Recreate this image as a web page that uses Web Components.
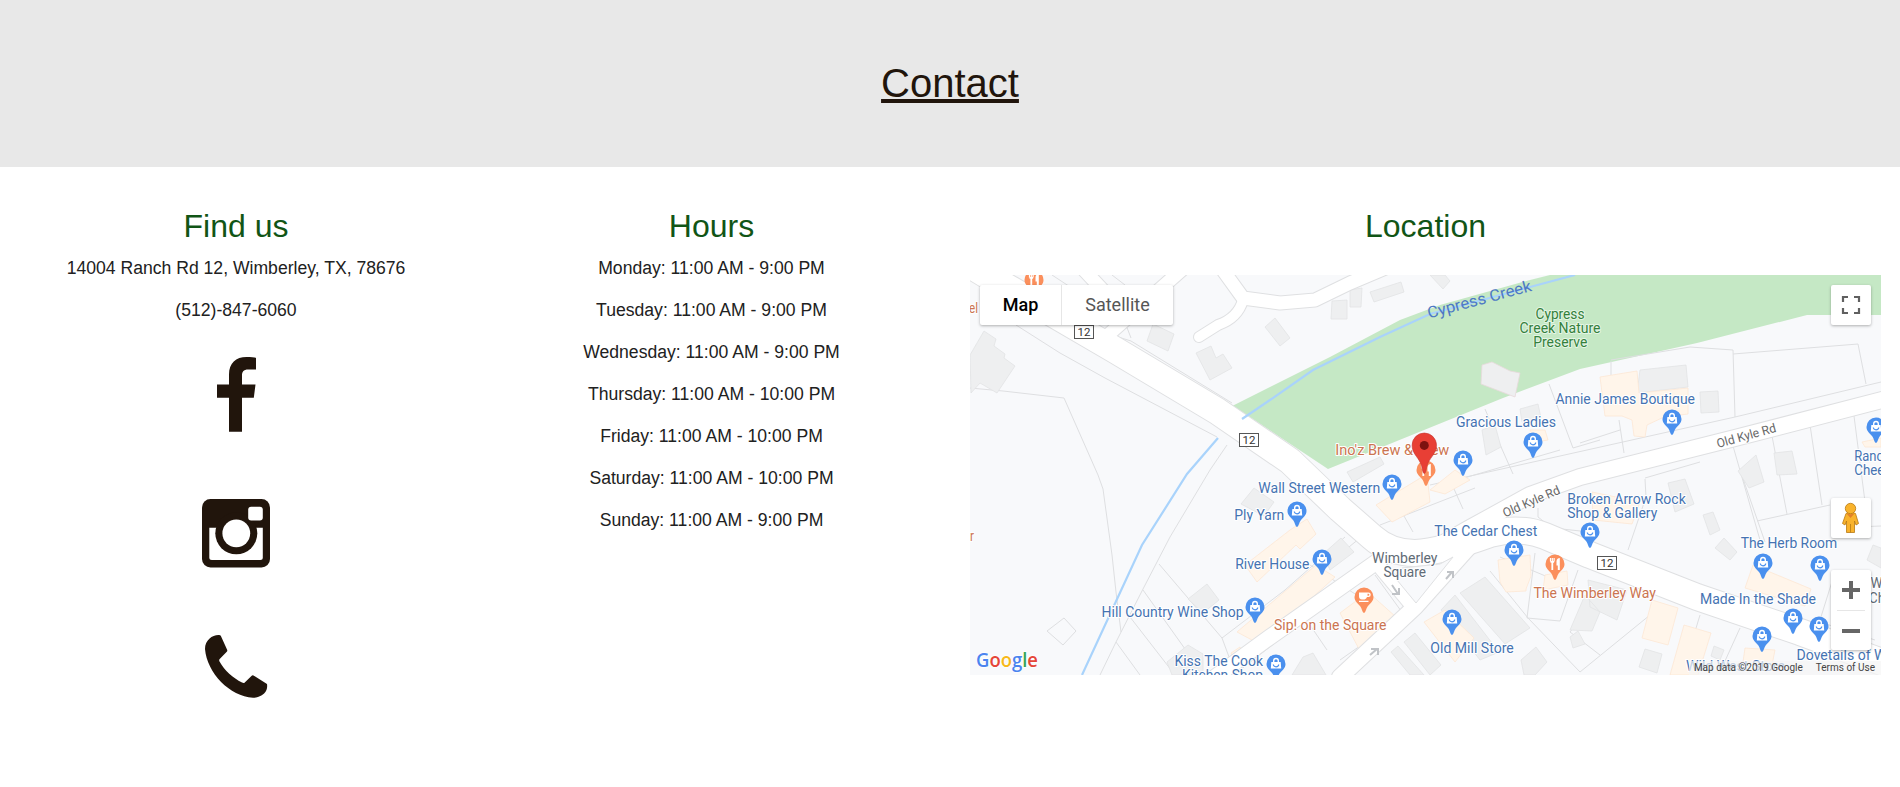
<!DOCTYPE html>
<html lang="en">
<head>
<meta charset="utf-8">
<title>Contact</title>
<style>
body{margin:0;background:#fff;color:#212121;font:17.600px/27px "Liberation Sans",Arial,sans-serif}
</style>
</head>
<body>
<contact-page></contact-page>
<script>
const define=(name,html,setup)=>customElements.define(name,class extends HTMLElement{
  constructor(){
    super();
    const t=document.createElement('template');
    t.innerHTML=html;
    this.attachShadow({mode:'open'}).append(t.content.cloneNode(true));
  }
  connectedCallback(){ if(setup&&!this.ready){this.ready=true;setup(this.shadowRoot,this);} }
});

define('page-banner',`<style>
:host{display:flex;justify-content:center;height:167px;background:#e8e8e8;color:#21150c}
h1{margin:60px 0 0;font-size:40px;line-height:46px;font-weight:400;text-decoration:underline;text-decoration-thickness:4px;text-underline-offset:2px;text-decoration-skip-ink:none}
</style><h1><slot></slot></h1>`);

define('info-column',`<style>
:host{display:block;text-align:center}
h2{margin:0 0 9px;font-size:32px;line-height:40px;font-weight:400;color:#115516}
</style><h2><slot name="title"></slot></h2><slot></slot>`);

define('info-line',`<style>:host{display:block;height:42px;line-height:27px;white-space:nowrap}</style><slot></slot>`);

define('social-links',`<style>
:host{display:flex;flex-direction:column;align-items:center;padding-top:18px;color:#21150c}
svg{display:block;fill:currentColor}
.ig{margin-top:67px}.ph{margin-top:67px}
</style>
<svg width="39" height="75"><path d="M39 .8V12.5H31.5C26 12.5 25 15 25 19V27.5H38.5L36.8 40.8H25V74.7H12V40.8H0V27.5H12V17.5C12 6 19 0 29.5 0 34 0 37.5.3 39 .8z"/></svg>
<svg class="ig" width="68" height="69"><rect width="68" height="68.5" rx="8.5"/><path fill="#fff" d="M7.3 28.7H60.8V58.5Q60.8 61 58.3 61H9.800Q7.300 61 7.300 58.500z"/><circle cx="34.300" cy="34.300" r="21"/><circle cx="34.300" cy="34.300" r="13.900" fill="#fff"/><rect x="46.200" y="7.700" width="14.600" height="13.800" rx="3" fill="#fff"/></svg>
<svg class="ph" width="63" height="63"><path d="M15 .2C8.500-.8 0 4.500 0 14 2 38 25 61.500 48 62.800 54 62.800 59 59.500 61 56 62.300 53.500 62.300 51 62 49L48.500 40.500Q47.500 39.800 46.700 40.700L39.500 47.700Q38.500 48.300 37 47.500C28 43 19.500 35.500 14.500 26.500Q13.800 25 14.700 24L22 16.500Q22.600 15.500 22 14.500L16 1.200Q15.600.4 15 .2z"/></svg>`);

define('map-pin',`<style>
:host{position:absolute;width:22px;height:30px;transform:translate(-11px,-11px)}
svg{display:block;overflow:visible}
:host{--pin:#4a90ee}
:host([kind=food]),:host([kind=cup]){--pin:#fb8f5c}
g{display:none}
:host([kind=shop]) .shop,:host([kind=food]) .food,:host([kind=cup]) .cup{display:inline}
</style><svg width="22" height="30" viewBox="-11 -11 22 30">
<path fill="var(--pin)" d="M0-9.500A9.500 9.500 0 0 1 9.500 0C9.500 4.500 6 6.300 3.800 9.200 2 11.600 1.500 15.800 0 15.800S-2 11.600-3.800 9.200C-6 6.300-9.500 4.500-9.500 0A9.500 9.500 0 0 1 0-9.500z"/>
<g class="shop"><path fill="none" stroke="#fff" stroke-width="1.400" d="M-2.300-1.500V-3.200a2.300 2.300 0 0 1 4.600 0V-1.500"/><path fill="#fff" d="M-4.700-2H4.700L5.200 4.600H-5.200z"/><path fill="none" stroke="var(--pin)" stroke-width="1.200" d="M-2.700.6a2.700 2.200 0 0 0 5.400 0"/></g>
<g class="food" fill="none" stroke="#fff"><path stroke-width="1.200" d="M-4.500-6V-2.500M-2.700-6V-2M-.9-6V-2.500"/><path stroke-width="1.800" d="M-4.500-2.200H-.9M-2.700-2V6"/><path fill="#fff" stroke="none" d="M4.800-6V6H2.800V1.500H1.500V-3Q2-6 4.800-6z"/></g>
<g class="cup"><path fill="#fff" d="M-5-4.500H4.500a2 2 0 0 1 0 4.500H3A3.500 3.200 0 0 1 .5 2.500H-2A3.200 3.200 0 0 1-5-.5zM3.500-3.300V-1.200H4.300a1 1 0 0 0 0-2.100zM-5 3.700H4.500V5H-5z"/></g>
</svg>`,(root,el)=>{el.style.left=el.getAttribute('x')-970+'px';el.style.top=el.getAttribute('y')-275+'px';});

define('route-shield',`<style>
:host{position:absolute;box-sizing:border-box;width:20px;height:14px;border:1px solid #555;background:#fff;color:#333;font:11.500px/12px Roboto,sans-serif;text-align:center}
</style><slot></slot>`,(root,el)=>{el.style.left=el.getAttribute('x')-970+'px';el.style.top=el.getAttribute('y')-275+'px';});

define('map-type',`<style>
:host{position:absolute;left:10px;top:10px;display:flex;height:40px;background:#fff;border-radius:2px;box-shadow:0 1px 3px rgba(0,0,0,.3);font:18px/40px Roboto,sans-serif;color:#565656}
b{font-weight:500;color:#000;width:81px;text-align:center;border-right:1px solid #e6e6e6}
span{width:111px;text-align:center}
</style><b>Map</b><span>Satellite</span>`);

define('map-button',`<style>
:host{display:block;width:40px;background:#fff;border-radius:2px;box-shadow:0 1px 3px rgba(0,0,0,.3)}
</style><slot></slot>`);

define('map-controls',`<style>
:host{position:absolute;left:861px;top:10px;display:flex;flex-direction:column}
svg{display:block}
.peg{margin-top:173px}.zoom{margin-top:32px}
</style>
<map-button><svg width="40" height="40" fill="none" stroke="#606060" stroke-width="2.200"><path d="M12 17V12H17M23 12H28V17M28 23V28H23M17 28H12V23"/></svg></map-button>
<map-button class="peg"><svg width="40" height="40" fill="#f9b32c" stroke="#b87a14" stroke-width=".8"><path d="M15 15.500Q19.500 12.500 24.500 15.500L27.500 25.500 25 27 23.500 23V34.500H15.500V23L14 27 11.500 25.500z"/><path d="M19.500 26V34.500" /><circle cx="19.500" cy="10.500" r="5.200"/><path fill="#e2802a" stroke="none" d="M15.500 15.500Q19.500 17 23.500 15.500L19.500 20z"/></svg></map-button>
<map-button class="zoom"><svg width="40" height="80"><path stroke="#666" stroke-width="4" d="M11 20H29M20 11V29M11 61H29"/><path stroke="#e6e6e6" d="M6 40.500H34"/></svg></map-button>`);

define('map-view',`<style>
:host{display:block;position:relative;width:911px;height:400px;overflow:hidden;background:#f8f9fb}
svg{display:block}
text{font-family:Roboto,sans-serif;font-size:13.800px;fill:#4573b2;paint-order:stroke;stroke:#fff;stroke-width:2px;stroke-linejoin:round}
.food{fill:#cb7450}.park{fill:#34803c;stroke:#e4f5e4}.grey{fill:#5f6b76}.road{fill:#686868;font-size:12.500px}.water{fill:#4e79c4;font-size:16px;stroke:none}
.over{position:absolute;left:0;top:0;pointer-events:none}
.terms{position:absolute;right:0;bottom:0;display:flex;gap:13px;box-sizing:border-box;height:14px;padding:0 6px 0 5px;background:rgba(245,245,245,.7);font:10px/14px Roboto,sans-serif;color:#444;white-space:nowrap}
.logo text{font:600 20px "Open Sans",sans-serif;stroke-width:1.500px}
</style>
<svg width="911" height="400" viewBox="970 275 911 400">
<path fill="#c5e8c5" d="M1232.700 405.700L1270 387 1330 357 1400 320 1440 305 1530 280 1550 275H1881V315H1807L1697 343 1580 369 1503 398 1328 469z"/>
<g fill="none" stroke="#dedfe1" stroke-width="1">
<path d="M980 275L1022 302M1052 275L1090 300M1112 275L1125 285M1016 325L1060 353 1105 378 1217 437M1115 336L1131 341 1232 403M1126 325L1131 338"/>
<path d="M970 388L1003 391 1064 398 1098 475 1103 489 1112 555 1116 592 1121 632M1227 445L1210 470 1170 537 1143 589 1116 642 1100 675M1159 564L1222 638 1232 665M1143 590L1200 670M1130 617L1175 675M1116 642L1140 675M1222 638L1285 590M1047 631L1064 618 1076 631 1063 645z"/>
<path d="M1485 409L1498 440 1513 474M1549 384L1573 448 1600 440M1611 361V375M1619 420L1624 453M1580 443L1620 430M1611 360L1690 347 1733 350 1735 417M1733 354L1858 344 1866 384M1430 485L1735 417 1881 382M1440 485L1560 450M1450 480L1463 509M1772 436L1787 514M1810 425L1822 505M1854 416L1868 525M1733 446L1760 540M1740 470L1765 542M1757 521L1830 505M1855 527L1881 526M1645 479L1646 497 1628 550M1645 478L1700 462M1538 508V517L1552 528 1590 532M1395 500L1413 532M1380 525L1475 488"/>
<path d="M1490 571L1528 618 1580 672M1500 557L1555 580M1535 553L1527 618 1560 621 1578 570M1580 620L1570 632 1600 655M1375 575L1404 615 1340 660M1360 538L1290 595M1350 585L1240 670M1345 537L1285 590M1310 565L1380 610M1310 625L1327 650M1700 615L1690 648M1740 628L1720 672M1650 615L1580 672M1820 620L1835 572M1820 622L1875 640"/>
</g>
<g fill="#eeeff0" stroke="#e2e3e4" stroke-width=".8">
<path d="M970 355L984 331 996 339 994 346 1005 354 1004 358 1015 366 997 393 980 383 971 393z"/>
<path d="M1153 324L1174 334 1168 351 1147 341zM1196 353L1211 346 1216 358 1223 354 1232 368 1210 380zM1265 327L1275 318 1290 338 1280 346zM1332 301L1347 300 1347 319 1331 319zM1350 290L1362 288 1361 307 1350 307zM1370 292L1401 282 1404 292 1374 302zM1430 275H1445L1450 281 1443 289z"/>
<path d="M1482 365L1492 362 1510 371 1520 373 1515 397 1481 384z" stroke="#e9d9dc"/>
<path d="M1640 370L1686 365 1688 387 1637 393zM1700 392L1718 391 1719 412 1701 413zM1520 409L1538 404 1541 418 1522 422zM1482 430L1495 425 1501 447 1486 455zM1738 471L1756 455 1764 482 1749 488zM1774 453L1792 451 1797 474 1777 475zM1668 483L1685 479 1694 504 1675 512zM1703 515L1713 512 1720 530 1710 535zM1715 548L1724 538 1737 552 1730 560zM1873 545L1881 548V568L1867 560zM1347 472L1380 457 1384 464 1353 482z"/>
<path d="M1241 504L1254 488 1274 502 1264 516zM1188 599L1207 584 1219 600 1203 613zM1167 662L1188 645 1203 654V675H1172zM1323 554L1341 538 1354 552 1330 570zM1404 642L1415 633 1441 665 1430 675zM1391 652L1398 646 1424 675H1410zM1303 657L1313 653 1326 675H1292zM1441 610L1455 595 1499 652 1480 660zM1460 593L1485 577 1530 628 1505 644zM1521 660L1536 647 1547 662 1535 675H1524zM1570 630L1585 595 1600 612 1592 631zM1570 637L1578 631 1585 644 1573 648zM1588 580L1627 590 1617 620 1590 607zM1645 649L1662 654 1657 673 1639 667zM1714 646L1724 650 1720 660 1711 656z"/>
</g>
<g fill="#fff5ea" stroke="#fce7d4" stroke-width=".8">
<path d="M1600 377L1637 371 1639 393 1688 388V414L1664 417 1647 425 1645 437 1634 436 1632 420 1622 416 1605 416zM1376 505L1427 474 1430 502 1392 522zM1430 490L1455 470 1470 480 1445 494zM1245 565L1290 530 1307 519 1316 534 1300 549 1296 545 1257 582zM1237 632L1316 565 1335 577 1260 645 1252 640zM1231 653L1240 647 1243 657 1234 663zM1340 613L1368 592 1396 617 1359 649zM1424 622L1445 610 1474 638 1455 662zM1498 560L1530 555 1531 576 1526 589 1526 591 1506 592 1500 582zM1545 575L1567 571 1568 585 1543 590zM1652 600L1678 608 1668 645 1642 638zM1684 625L1711 633 1698 675H1670zM1753 565L1811 589 1805 606 1745 588zM1745 648L1775 650 1772 665 1743 662zM1592 492L1640 502 1632 524 1593 520zM1530 430H1545L1548 440 1536 442zM1862 442L1881 438V447H1865z"/>
</g>
<g fill="none" stroke-linejoin="round" stroke-linecap="round">
<g id="casing"></g><g id="fill"></g>
</g>
<path fill="#f8f9fb" stroke="#e0e1e3" d="M1402 568L1440 564 1453 557 1416 603 1397 580z"/>
<path fill="none" stroke="#a9d3fb" stroke-width="2.200" d="M1575 275L1530 287 1430 314 1380 337 1313 370 1270 400 1242 419M1218 438L1187 474 1142 545 1082 675"/>
<g fill="none" stroke="#c0c3c7" stroke-width="2"><path d="M1392 585L1398 594M1399 588V594H1392M1446 579L1452 572M1447 572H1453V578M1370 655L1377 649M1371 649H1378V655"/></g>
</svg>
<route-shield x="1074" y="325">12</route-shield><route-shield x="1239" y="433">12</route-shield><route-shield x="1597" y="556">12</route-shield>
<div id="pins"></div>
<svg class="over" id="labels" width="911" height="400" viewBox="970 275 911 400"></svg>
<svg class="over" width="911" height="400" viewBox="970 275 911 400">
<path fill="#e83f35" stroke="#c53630" stroke-width=".6" d="M1424.300 433a12.200 12.200 0 0 1 12.200 12.200C1436.500 453 1431 456.500 1428 463 1426.300 467 1426 473.500 1424.300 473.500S1422.300 467 1420.500 463C1417.500 456.500 1412.100 453 1412.100 445.200A12.200 12.200 0 0 1 1424.300 433z"/><circle cx="1424.300" cy="445.400" r="4.500" fill="#7d1210"/>
<g class="logo"><text x="976" y="667" textLength="62" lengthAdjust="spacingAndGlyphs"><tspan fill="#4b84ef">G</tspan><tspan fill="#e54638">o</tspan><tspan fill="#f7b91b">o</tspan><tspan fill="#4b84ef">g</tspan><tspan fill="#38a554">l</tspan><tspan fill="#e54638">e</tspan></text></g>
</svg>
<div class="terms"><span>Map data ©2019 Google</span><span>Terms of Use</span></div>
<map-type></map-type><map-controls></map-controls>`,root=>{
  const ns='http://www.w3.org/2000/svg';
  const roads=[
    [26,'M960 259L1000 283 1115 350 1217 411 1290 461 1340 509 1372 537Q1390 553 1415 553 1440 552 1490 534 1520 526 1545 536L1590 555 1697 597 1800 632 1890 665'],
    [16,'M1890 398L1735 438 1580 477 1530 495 1470 528 1440 545'],
    [15,'M1385 556L1270 637 1215 677'],[16,'M1475 540L1415 607 1340 677'],[13,'M1378 565L1413 607'],
    [13,'M1185 267L1108 335M1084 270L1112 300'],
    [13,'M1217 262L1243 298 1280 303 1315 300 1350 283 1395 264'],[10,'M1243 300Q1238 318 1218 325L1199 337']
  ];
  for(const [w,d] of roads) for(const [id,c,e] of [['casing','#dfe0e2',2],['fill','#fff',0]]){
    const p=document.createElementNS(ns,'path');
    p.setAttribute('d',d);p.setAttribute('stroke',c);p.setAttribute('stroke-width',w+e);
    root.getElementById(id).append(p);
  }
  const pins=[['food',1034.3,279.7],['shop',1533.3,441.7],['shop',1463.3,460.3],['shop',1672.3,418.7],['shop',1876.3,427.3],['shop',1392.3,484],['shop',1297.3,510.7],['shop',1322.3,559.3],['shop',1255.3,607.3],['shop',1275.7,663.7],['cup',1364.3,596.7],['shop',1452.3,619.3],['shop',1514.3,550.3],['food',1555.3,564.3],['shop',1590.3,532.3],['shop',1763.3,562.7],['shop',1820.3,565.3],['shop',1793.3,618.3],['shop',1819.3,626.3],['shop',1762.3,636.3],['food',1426.3,470]];
  for(const [k,x,y] of pins){
    const p=document.createElement('map-pin');
    p.setAttribute('kind',k);p.setAttribute('x',x);p.setAttribute('y',y);
    root.getElementById('pins').append(p);
  }
  const labels=[
    ['Hill Country Wine Shop',1101.5,617,142],['Kiss The Cook',1174.5,666,88.5],['Kitchen Shop',1182,680,81],['River House',1235.3,569,74],['Ply Yarn',1234.3,519.7,50],['Wall Street Western',1258.3,493,122],['The Cedar Chest',1434.3,536,103],
    ['Wimberley',1372,563.3,65.5,'grey'],['Square',1383.5,577.3,42.5,'grey'],['Sip! on the Square',1274,630,112.5,'food'],['Old Mill Store',1430.3,653,83.5],['The Wimberley Way',1533.5,598,122.5,'food'],
    ['Broken Arrow Rock',1567.3,503.7,118.5],['Shop & Gallery',1567.3,518,90],['The Herb Room',1740.7,548,96.5],['Made In the Shade',1700,604,116],['Dovetails of W',1796.5,660,90],['Wild West Store',1686,671,99],
    ['W',1870.5,588,12,'grey'],['Ch',1869,603,16,'grey'],['Ranc',1854.3,461,29],['Chee',1854.3,475,30],['Annie James Boutique',1555.5,404,139.5],['Gracious Ladies',1456,427,100],["Ino'z Brew & Brew",1335.3,455,114,'food'],
    ['Cypress',1535.5,319.3,49,'park'],['Creek Nature',1519.5,333.3,81,'park'],['Preserve',1533.3,347.3,54,'park'],['Cypress Creek',1429,318.5,107,'water',-15],
    ['Old Kyle Rd',1718,448,61,'road',-15.5],['Old Kyle Rd',1505,517.5,61,'road',-23.5],['el',969,313,9,'food'],['r',970,541,4,'food']
  ];
  for(const [s,x,y,w,c,r] of labels){
    const t=document.createElementNS(ns,'text');
    t.textContent=s;t.setAttribute('x',x);t.setAttribute('y',y);t.setAttribute('textLength',w);t.setAttribute('lengthAdjust','spacingAndGlyphs');
    if(c)t.setAttribute('class',c);
    if(r)t.setAttribute('transform','rotate('+r+' '+x+' '+y+')');
    root.getElementById('labels').append(t);
  }
});

define('contact-page',`<style>
:host{display:block}
main{display:grid;grid-template-columns:472px 479px 949px;padding-top:39px}
map-view{margin:29px 0 0 19px}
</style>
<page-banner>Contact</page-banner>
<main>
<info-column><span slot="title">Find us</span>
<info-line>14004 Ranch Rd 12, Wimberley, TX, 78676</info-line><info-line>(512)-847-6060</info-line>
<social-links></social-links></info-column>
<info-column><span slot="title">Hours</span>
<info-line>Monday: 11:00 AM - 9:00 PM</info-line><info-line>Tuesday: 11:00 AM - 9:00 PM</info-line><info-line>Wednesday: 11:00 AM - 9:00 PM</info-line><info-line>Thursday: 11:00 AM - 10:00 PM</info-line><info-line>Friday: 11:00 AM - 10:00 PM</info-line><info-line>Saturday: 11:00 AM - 10:00 PM</info-line><info-line>Sunday: 11:00 AM - 9:00 PM</info-line></info-column>
<info-column><span slot="title">Location</span><map-view></map-view></info-column>
</main>`);
</script>
</body>
</html>
